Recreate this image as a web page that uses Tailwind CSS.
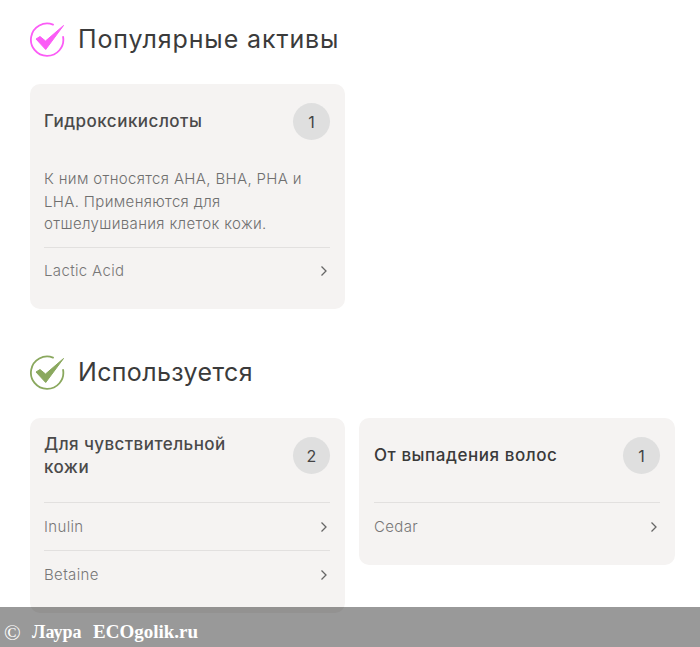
<!DOCTYPE html>
<html lang="ru">
<head>
<meta charset="utf-8">
<script src="https://cdn.jsdelivr.net/npm/@tailwindcss/browser@4"></script>
</head>
<body class="bg-white">
<div class="relative h-[647px] w-[700px] overflow-hidden font-['Inter','Liberation_Sans',sans-serif]">
  <div class="flex flex-col pl-[30px] pt-[22px]">
    <div class="flex h-[35px] items-center gap-[13px]">
      <svg class="size-[35px] shrink-0" viewBox="0 0 35 35" fill="none">
        <path d="M23 2.6A16.2 16.2 0 1 0 33.1 15" stroke="#fb5cf6" stroke-width="1.8" stroke-linecap="round"/>
        <path d="M6 17L10 14.5L15.5 19L33.5 3.5L15.7 27.5Z" fill="#fb5cf6" stroke="#fb5cf6" stroke-width="1" stroke-linejoin="round"/>
      </svg>
      <h2 class="text-[25px] leading-[35px] tracking-[0.9px] text-[#3b3b3b]">Популярные активы</h2>
    </div>
    <div class="mt-[27px] grid grid-cols-[315px_316px] items-start gap-[14px]">
      <div class="h-[225px] rounded-[10px] bg-[#f5f3f2] pl-[14px] pr-[15px] pt-[19px]">
        <div class="flex items-center justify-between">
          <span class="text-[17px] font-[450] tracking-[0.5px] text-[#4a4a4a]">Гидроксикислоты</span>
          <span class="flex size-[37px] items-center justify-center rounded-full bg-[#dfdfdf] text-[16px] text-[#444]">1</span>
        </div>
        <p class="mt-[28px] text-[15px] font-light leading-[22.5px] tracking-[0.35px] text-[#6f6f6f]">К ним относятся AHA, BHA, PHA и LHA. Применяются для отшелушивания клеток кожи.</p>
        <div class="mt-[11px] flex h-[48px] items-center justify-between border-t border-[#e2e0df] text-[15px] font-light tracking-[0.35px] text-[#777]">
          <span>Lactic Acid</span>
          <svg class="mr-[2px] h-[12px] w-[8px]" viewBox="0 0 8 12" fill="none"><path d="M1.5 1.5L6 6L1.5 10.5" stroke="#666" stroke-width="1.3"/></svg>
        </div>
      </div>
    </div>
    <div class="mt-[46px] flex h-[35px] items-center gap-[13px]">
      <svg class="size-[35px] shrink-0" viewBox="0 0 35 35" fill="none">
        <path d="M23 2.6A16.2 16.2 0 1 0 33.1 15" stroke="#8aa85e" stroke-width="1.8" stroke-linecap="round"/>
        <path d="M6 17L10 14.5L15.5 19L33.5 3.5L15.7 27.5Z" fill="#8aa85e" stroke="#8aa85e" stroke-width="1" stroke-linejoin="round"/>
      </svg>
      <h2 class="text-[25px] leading-[35px] tracking-[0.35px] text-[#3b3b3b]">Используется</h2>
    </div>
    <div class="mt-[28px] grid grid-cols-[315px_316px] items-start gap-[14px]">
      <div class="rounded-[10px] bg-[#f5f3f2] pb-[15px] pl-[14px] pr-[15px] pt-[19px]">
        <div class="flex h-[37px] items-center justify-between">
          <span class="w-[215px] text-[17px] font-[450] leading-[22.5px] tracking-[0.45px] text-[#4a4a4a]">Для чувствительной кожи</span>
          <span class="flex size-[37px] items-center justify-center rounded-full bg-[#dfdfdf] text-[16px] text-[#444]">2</span>
        </div>
        <div class="mt-[28px] flex h-[48px] items-center justify-between border-t border-[#e2e0df] text-[15px] font-light tracking-[0.35px] text-[#777]">
          <span class="pt-[2px]">Inulin</span>
          <svg class="mr-[2px] h-[12px] w-[8px]" viewBox="0 0 8 12" fill="none"><path d="M1.5 1.5L6 6L1.5 10.5" stroke="#666" stroke-width="1.3"/></svg>
        </div>
        <div class="flex h-[48px] items-center justify-between border-t border-[#e2e0df] text-[15px] font-light tracking-[0.35px] text-[#777]">
          <span class="pt-[2px]">Betaine</span>
          <svg class="mr-[2px] h-[12px] w-[8px]" viewBox="0 0 8 12" fill="none"><path d="M1.5 1.5L6 6L1.5 10.5" stroke="#666" stroke-width="1.3"/></svg>
        </div>
      </div>
      <div class="rounded-[10px] bg-[#f5f3f2] pb-[15px] pl-[15px] pr-[15px] pt-[19px]">
        <div class="flex h-[37px] items-center justify-between">
          <span class="text-[17px] font-[450] tracking-[0.55px] text-[#3a3a3a]">От выпадения волос</span>
          <span class="flex size-[37px] items-center justify-center rounded-full bg-[#dfdfdf] text-[16px] text-[#444]">1</span>
        </div>
        <div class="mt-[28px] flex h-[48px] items-center justify-between border-t border-[#e2e0df] text-[15px] font-light tracking-[0.35px] text-[#777]">
          <span class="pt-[2px]">Cedar</span>
          <svg class="mr-[2px] h-[12px] w-[8px]" viewBox="0 0 8 12" fill="none"><path d="M1.5 1.5L6 6L1.5 10.5" stroke="#666" stroke-width="1.3"/></svg>
        </div>
      </div>
    </div>
  </div>
  <div class="absolute inset-x-0 bottom-0 flex h-[40px] items-center bg-black/40 pl-[4px] pt-[11px] font-['Liberation_Serif',serif] font-bold text-white">
    <span class="w-[28px] text-[22px] font-normal">©</span>
    <span class="w-[61px] text-[18px]">Лаура</span>
    <span class="text-[19px]">ECOgolik.ru</span>
  </div>
</div>
</body>
</html>
